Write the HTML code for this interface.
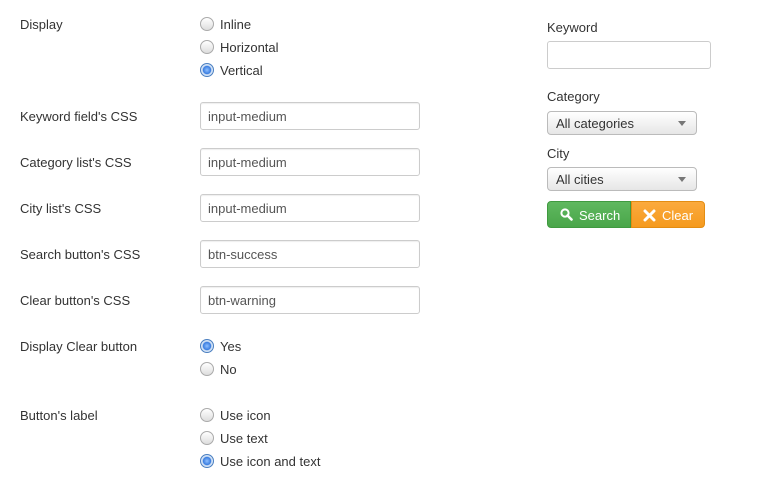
<!DOCTYPE html><html><head><style>
body{margin:0;width:764px;height:479px;background:#fff;font-family:"Liberation Sans",sans-serif;font-size:13px;color:#333;position:relative;overflow:hidden}
.a{position:absolute;line-height:18px}
.r{position:absolute;width:12px;height:12px;border-radius:50%;border:1px solid #aaa;background:linear-gradient(#fff,#ddd)}
.r.on{border-color:#4a7fc0;background:radial-gradient(circle,#8fc0ff 0,#3a7de0 45%,#cfe0f5 55%,#e8eef8 100%)}
.i{position:absolute;left:200px;width:211px;height:26px;border:1px solid #ccc;border-radius:3px;padding-left:7px;line-height:27px;color:#555;box-shadow:inset 0 1px 1px rgba(0,0,0,.07)}
.s{position:absolute;left:547px;width:140px;height:22px;border:1px solid #bbb;border-radius:4px;background:linear-gradient(#fff,#e6e6e6);padding-left:8px;line-height:24px;color:#333}
.s:after{content:"";position:absolute;right:10px;top:9px;border:4px solid transparent;border-top:5px solid #777;border-bottom:0}
</style></head><body>
<div class="a" style="left:20px;top:16px">Display</div>
<div class="r" style="left:200px;top:17px"></div><div class="a" style="left:220px;top:16px">Inline</div>
<div class="r" style="left:200px;top:40px"></div><div class="a" style="left:220px;top:39px">Horizontal</div>
<div class="r on" style="left:200px;top:63px"></div><div class="a" style="left:220px;top:62px">Vertical</div>
<div class="a" style="left:20px;top:108px">Keyword field's CSS</div><div class="i" style="top:102px">input-medium</div>
<div class="a" style="left:20px;top:154px">Category list's CSS</div><div class="i" style="top:148px">input-medium</div>
<div class="a" style="left:20px;top:200px">City list's CSS</div><div class="i" style="top:194px">input-medium</div>
<div class="a" style="left:20px;top:246px">Search button's CSS</div><div class="i" style="top:240px">btn-success</div>
<div class="a" style="left:20px;top:292px">Clear button's CSS</div><div class="i" style="top:286px">btn-warning</div>
<div class="a" style="left:20px;top:338px">Display Clear button</div>
<div class="r on" style="left:200px;top:339px"></div><div class="a" style="left:220px;top:338px">Yes</div>
<div class="r" style="left:200px;top:362px"></div><div class="a" style="left:220px;top:361px">No</div>
<div class="a" style="left:20px;top:407px">Button's label</div>
<div class="r" style="left:200px;top:408px"></div><div class="a" style="left:220px;top:407px">Use icon</div>
<div class="r" style="left:200px;top:431px"></div><div class="a" style="left:220px;top:430px">Use text</div>
<div class="r on" style="left:200px;top:454px"></div><div class="a" style="left:220px;top:453px">Use icon and text</div>

<div class="a" style="left:547px;top:19px">Keyword</div>
<div style="position:absolute;left:547px;top:41px;width:162px;height:26px;border:1px solid #ccc;border-radius:3px"></div>
<div class="a" style="left:547px;top:88px">Category</div>
<div class="s" style="top:111px">All categories</div>
<div class="a" style="left:547px;top:145px">City</div>
<div class="s" style="top:167px">All cities</div>
<div style="position:absolute;left:547px;top:201px;width:84px;height:27px;background:linear-gradient(#5fb85f,#4aa64a);border:1px solid #409a40;border-radius:4px 0 0 4px;box-sizing:border-box;color:#fff;line-height:27px">
<svg style="position:absolute;left:12px;top:6px" width="13" height="13" viewBox="0 0 13 13"><circle cx="5" cy="5" r="3.6" fill="none" stroke="#fff" stroke-width="2"/><path d="M7.5 7.5L11.5 11.5" stroke="#fff" stroke-width="2.6" stroke-linecap="round"/></svg>
<span style="position:absolute;left:31px">Search</span></div>
<div style="position:absolute;left:631px;top:201px;width:74px;height:27px;background:linear-gradient(#fbaa3e,#f59a1e);border:1px solid #e38d13;border-radius:0 4px 4px 0;box-sizing:border-box;color:#fff;line-height:27px">
<svg style="position:absolute;left:11px;top:7px" width="13" height="13" viewBox="0 0 13 13"><path d="M2 2L11 11M11 2L2 11" stroke="#fff" stroke-width="3" stroke-linecap="round"/></svg>
<span style="position:absolute;left:30px">Clear</span></div>
</body></html>
